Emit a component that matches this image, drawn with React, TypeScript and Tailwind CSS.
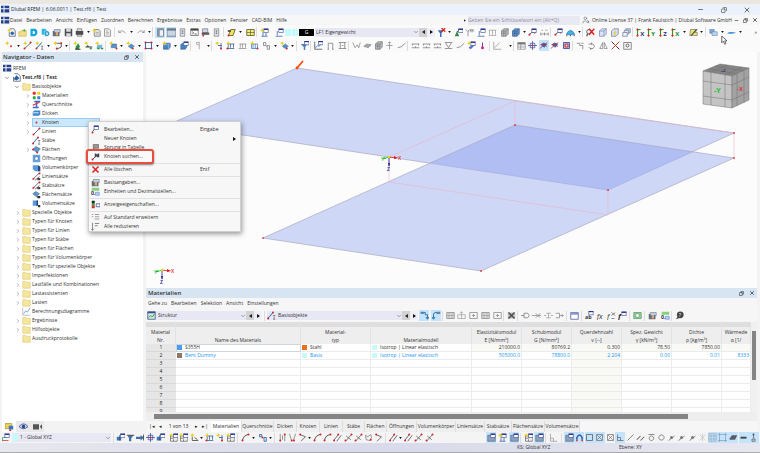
import React from 'react';
import clsx from 'clsx';
import { ChevronDown, ChevronRight, Copy, Minus, UserSearch, X } from 'lucide-react';

const star = <path d="M3 0l.9 2L6 3l-2.1 1L3 6l-.9-2L0 3l2.1-1z" fill="#e6cf1d" />;
const redDot = (x: number, y: number) => <circle key={`${x}-${y}`} cx={x} cy={y} r="1.3" fill="#d3232b" />;
const table = (x: number, y: number) => (
  <>
    <path d={`M${x} ${y}h6v5h-6z`} fill="#fff" stroke="#3a4a90" strokeWidth=".8" />
    <path d={`M${x} ${y}h6v1.6h-6z`} fill="#26368c" />
  </>
);
const line = (d: string, color = '#555', width = 1) => <path d={d} fill="none" stroke={color} strokeWidth={width} />;
const axis = (letter: string, color: string) => (
  <>
    {line('M2 11V2M2 2h4', '#1b9e2d', 1.4)}
    <path d="M0 3h4L2 0z" fill="#e0271c" />
    <circle cx="2" cy="10" r="1.5" fill="#e0271c" />
    <text x="5.5" y="11" fontSize="8" fontWeight="700" fill={color}>
      {letter}
    </text>
  </>
);

const glyphs: Record<string, React.ReactNode> = {
  newdoc: <>{line('M4 1h5l2 3v7H3V5', '#4c5a6a')}<circle cx="7" cy="7" r="2.4" fill="#2d66ae" />{star}</>,
  open: <><path d="M1 5h3l1-2h6v8H1z" fill="#f0de8c" stroke="#c5a943" strokeWidth=".7" /><path d="M6 4l3-3 1 4z" fill="#59b04e" /></>,
  dblue: <><path d="M2 1h5q5 0 4 6-1 4-5 4H2z" fill="#11a6df" /><path d="M5 4h2q2 2 0 4H5z" fill="#fff" /></>,
  dcopy: <><path d="M1 1h5l3 4v4H1z" fill="#2fb6e2" /><path d="M5 4h4q3 1 2 5-1 2-3 2H5z" fill="#0d94cc" stroke="#fff" strokeWidth=".6" /><path d="M7 6h2v3H7z" fill="#fff" /></>,
  brief: <><path d="M1 4h9v7H1z" fill="#666e78" /><path d="M3 2h8v4H3z" fill="#b9d2ec" stroke="#555" strokeWidth=".6" /><path d="M5 5h3v5H5z" fill="#d8a57a" /></>,
  save: <><path d="M1 1h9l1 1v9H1z" fill="#4a4d52" /><path d="M3 1h6v4H3zM3 7h6v4H3z" fill="#d8dbe0" /></>,
  print: <><path d="M3 1h6v4H3zM3 8h6v3H3z" fill="#ddd" stroke="#444" strokeWidth=".7" /><path d="M1 4h10v5H1z" fill="#4b4d50" /></>,
  pagestar: <><path d="M3 2h6l2 2v7H3z" fill="#e4e4e0" stroke="#6b6b66" strokeWidth=".9" />{line('M5 6h4M5 8h4', '#888', 0.7)}{star}</>,
  page: <><path d="M2 1h6l2 2v8H2z" fill="#eee" stroke="#777" strokeWidth=".9" />{line('M4 4h3M4 6h4M4 8h4', '#888', 0.7)}</>,
  undo: line('M1 6h3M1 3v3M1 6q5-5 9 1', '#8a8a8a'),
  redo: line('M11 6H8M11 3v3M11 6Q6 1 2 7', '#8a8a8a'),
  panel: <><path d="M2 1h8v10H2z" fill="#eef3f8" stroke="#56616e" strokeWidth=".9" /><path d="M2 1h8v2H2zM2 3h3v8H2z" fill="#8492a3" /></>,
  window: <><path d="M0 1h12v10H0z" fill="#cad5e4" stroke="#56616e" strokeWidth=".9" /><path d="M0 1h12v2.5H0z" fill="#68788d" /></>,
  phone: <><path d="M3 1h6v10H3z" fill="#dfe3e8" stroke="#777" strokeWidth=".9" /><path d="M5 3h2v2H5zM5 6h2v2H5z" fill="#6c7ca0" /></>,
  terminal: <><path d="M1 1h10v9H1z" fill="#fff" stroke="#555" strokeWidth=".9" /><path d="M1 1h10v2.5H1z" fill="#444" />{line('M3 5l2 1.5L3 8M6 8h3', '#333')}</>,
  printer2: <><path d="M2 1h7v5H2z" fill="#ccd5e6" stroke="#555" strokeWidth=".7" /><path d="M1 6h10v3H1z" fill="#555" />{redDot(3, 10)}</>,
  plane: <><path d="M2 10L5 2h6L8 10z" fill="#f3e458" stroke="#4e4a20" strokeWidth="1" />{redDot(2, 10)}<path d="M1 3h4v2H1z" fill="#333" /></>,
  ybox: <><path d="M1 2h10v8H1z" fill="#f6ee7a" stroke="#4b4b2a" strokeWidth="1" />{line('M6 2v8M1 6h10', '#4b4b2a', 0.8)}</>,
  startable: <>{line('M2 11h8M4 5v6M8 6v5', '#315fa5')}{table(5, 1)}{star}</>,
  loadtable: <>{line('M1 11h9M3 4v6', '#315fa5')}{table(5, 1)}</>,
  funnelx: <><path d="M1 3h8L6 7v5H4V7z" fill="#3a70b3" />{line('M6 0l5 5M11 0L6 5', '#d9201a', 1.7)}</>,
  funnel: <><path d="M1 4h9L7 8v4H5V8z" fill="#4d7fbd" />{table(6, 0)}</>,
  support: <><path d="M4 4l3 7H1z" fill="#32894a" />{line('M4 5l4-3', '#222')}{table(6, 1)}</>,
  graysup: <>{line('M1 2l3 3 2-3M4 5v6M7 3h4', '#7b7b7b')}{line('M7 2h4v3H7z', '#8a8a8a', 0.8)}</>,
  gload: <>{line('M1 3h10M2 3v6M6 3v6M10 3v6M1 10h10', '#888', 0.8)}</>,
  cube: <><path d="M2 4l3-3h6v7l-3 3H2z" fill="#b9bdc2" stroke="#666" strokeWidth=".8" />{line('M2 4h6v7M8 4l3-3M5 4v7M2 7h6', '#666', 0.7)}</>,
  bcube: <><path d="M2 4l3-3h6v7l-3 3H2z" fill="#6197d0" stroke="#274c7f" strokeWidth=".8" />{line('M2 4h6v7M8 4l3-3M5 4v7M2 7h6', '#274c7f', 0.7)}</>,
  lcube: <><path d="M2 4l3-3h6v7l-3 3H2z" fill="#d8e5f5" stroke="#6976ae" strokeWidth=".8" />{line('M2 4h6v7M8 4l3-3', '#6976ae', 0.8)}</>,
  ycube: <><path d="M2 4l3-3h6v7l-3 3H2z" fill="#d7dff5" stroke="#57658f" strokeWidth=".8" /><path d="M8 2L4 7h2l-1 4 4-5H7z" fill="#e9ce3d" /></>,
  copies: <><path d="M5 1h6v5H5z" fill="#cfd9ef" stroke="#57658f" strokeWidth=".8" /><path d="M3 3h6v5H3z" fill="#dfe6f5" stroke="#57658f" strokeWidth=".8" /><path d="M1 6h6v5H1z" fill="#eef2fa" stroke="#57658f" strokeWidth=".8" /></>,
  rlink: <>{line('M1 9l4-3h4', '#333')}{redDot(2, 9)}{redDot(9, 6)}{table(5, 1)}</>,
  dims: line('M1 8h10M1 6v4M6 6v4M11 6v4M2 3h2M7 3h3', '#777', 0.9),
  dome: <><path d="M1 7q5-8 10 0v2H1z" fill="#42afe5" stroke="#1d6b9a" strokeWidth=".7" />{line('M1 9v2M11 9v2M6 9v2', '#333')}</>,
  findx: <><circle cx="4" cy="5" r="3" fill="none" stroke="#444" strokeWidth="1.1" />{line('M2 8l-1 3', '#444', 1.5)}{line('M4 1l7 8M11 1L4 9', '#de1c18', 1.8)}</>,
  axx: axis('X', '#2a3270'),
  axy: axis('Y', '#1b8a2d'),
  axz: axis('Z', '#2a3270'),
  axmx: axis('X', '#1b8a2d'),
  edit: <><path d="M2 2h9l-3 4h3v4H1z" fill="#e9e27b" stroke="#555" strokeWidth=".7" />{line('M3 10l7-8', '#333', 1.5)}</>,
  layers: <><path d="M1 2h6v5H1z" fill="#7ea8d6" stroke="#466f9e" strokeWidth=".6" /><path d="M4 5h7v5H4z" fill="#bcd2ea" stroke="#466f9e" strokeWidth=".6" /></>,
  disc: <path d="M0 7q3-3 12-1-4 3-12 1z" fill="#3e8bd2" />,
  starnode: <>{star}{redDot(8, 7)}</>,
  starline: <>{line('M2 10l9-8', '#444')}{redDot(2, 10)}{redDot(10, 2)}{star}</>,
  starmember: <>{line('M2 10l7-8', '#3f7fc4', 1.4)}{redDot(2, 10)}{line('M8 7h3M9.500 7v4M8 11h3', '#555', 0.8)}{star}</>,
  starpoly: <>{line('M3 3h8v5L5 11', '#444', 1.1)}{redDot(11, 3)}{redDot(5, 10)}{star}</>,
  green: <><path d="M7 3l2 4-1 4H3l1-4z" fill="#2f8e46" />{line('M3 11h7', '#222', 1.2)}{star}</>,
  green2: <><path d="M3 8l2-3 2 3zM7 11l2-3 2 3z" fill="#2f8e46" />{line('M2 8h9', '#333', 1.2)}{star}</>,
  green3: <><path d="M3 5h7l-1 5H2z" fill="#7bb9d9" /><path d="M3 9h3v2H3zM8 9h3v2H8z" fill="#2f8e46" />{star}</>,
  surf: <><path d="M3 4h7v5H3z" fill="#4f93d3" stroke="#315c8a" strokeWidth=".6" />{redDot(10, 10)}{star}</>,
  surf2: <><path d="M3 7l4-3 4 3-4 3z" fill="#4f93d3" stroke="#315c8a" strokeWidth=".6" />{redDot(9, 10)}{star}</>,
  opening: <><path d="M2 2h8v8H2z" fill="none" stroke="#3974b8" strokeWidth="1.4" />{[redDot(2, 2), redDot(10, 2), redDot(2, 10), redDot(10, 10)]}</>,
  solid: <><path d="M2 5l2-2h7v5l-2 3H2z" fill="#4583c4" stroke="#2a5388" strokeWidth=".7" />{line('M2 5h7v6M9 5l2-2', '#bcd7f0', 0.8)}{star}</>,
  solidt: <><path d="M1 5l2-2h6v5l-2 3H1z" fill="#4583c4" stroke="#2a5388" strokeWidth=".7" />{table(5, 1)}</>,
  gflag: <>{line('M7 1v10M7 2H3l1 3h3', '#999')}</>,
  ystar: <>{line('M8 3v8M4 6h5', '#3e679d', 1.2)}{star}{redDot(8, 10)}</>,
  loads: <>{line('M2 4h9M3 4v5M6 4v5M10 4v5M1 10h10', '#3e679d', 1.1)}{redDot(2, 10)}{star}</>,
  gloads: <>{line('M2 4h9M3 4v5M6 4v5M10 4v5M1 10h10', '#888', 1)}</>,
  bloads: <>{line('M2 4h8v6H2zM4 4v6M7 4v6', '#3f7fc4', 1)}{redDot(10, 10)}{star}</>,
  gnum: line('M2 2h3v4H2zM7 6h3v5H7zM5 6l2 2', '#777'),
  diag: <>{line('M1 1v10h10', '#444')}{line('M2 9l3-3 2 1 3-4', '#2d7ad0', 1.2)}{table(6, 0)}</>,
  arch: line('M3 11V3h6v8M2 11h2M8 11h2', '#777'),
  frame: line('M1 2h10M1 10h10M3 2v8M9 2v8M5 6h2', '#777'),
  tri: line('M1 2l3 7 3-4 2 4 2-7', '#888'),
  surfg: <path d="M1 7l4-3 6 1-4 4z" fill="#aaa" stroke="#777" strokeWidth=".7" />,
  arrows: line('M6 1v10M2 6h8M4 3l2-2 2 2', '#888'),
  slope: line('M1 9q5 0 10-6', '#888', 1.2),
  zig: line('M1 4h10M1 9h10M2 4v2M6 9V7M10 4v2', '#777'),
  zigb: line('M1 2h10M1 10h10M2 2l4 7 4-7', '#777'),
  ystable: <><path d="M2 9l6-5 2 2-5 5z" fill="#4f74c4" />{table(5, 1)}{star}</>,
  pin: <>{line('M6 2v8', '#7a3fa0', 1.4)}<circle cx="6" cy="9" r="2" fill="#cc2589" /></>,
  angle: line('M1 1v10h10M2 9l7-7', '#888', 0.9),
  ggrid: <>{line('M1 2h10v9H1zM1 5h10M1 8h10M5 2v9', '#777', 0.8)}<path d="M1 2h10v2H1z" fill="#777" /></>,
  target: <>{line('M6 0v12M0 6h12M3 3h6v6H3z', '#3a4fa8')}{redDot(6, 6)}</>,
  turn: <><path d="M2 5l4-3 5 2-4 5z" fill="#3d6dc0" />{line('M1 10L11 2M2 5q6-3 8 3', '#c3262b')}</>,
  redbox: <><path d="M2 2h8v8H2z" fill="#d9dff2" stroke="#3a4fa8" strokeWidth="1.2" />{line('M4 4h4v4H4z', '#c3262b', 1.4)}</>,
  mirror: line('M1 10l4-8v8zM11 10L7 2v8z', '#777', 0.9),
  rot: line('M2 4h6l2 3-2 3H4L2 8M6 2v3M5 9v3', '#777'),
  gcurve: line('M1 3h4v3h4v5M7 3h3', '#777'),
  redx: <>{line('M1 1l10 10M11 1L1 11', '#c7352d', 1.3)}{line('M1 1l3 3M8 8l3 3', '#333', 1.3)}</>,
  gear: <>{line('M1 2h10v9H1z', '#666')}<circle cx="6" cy="6" r="2" fill="none" stroke="#555" strokeWidth="1.2" /></>,
  flag: <><path d="M0 1h11v9H0z" fill="#27408b" />{line('M4 1v9M0 5h11', '#fff', 1.3)}</>,
  rfdoc: <>{line('M3 1h5l3 3v7H2V5', '#4c5a6a')}<path d="M2 8l4-5 4 4-4 3z" fill="#2a5fa4" /></>,
  folder: <><path d="M1 2h4l1 1h5v8H1z" fill="#f4e69c" stroke="#d8c46b" strokeWidth=".7" /></>,
  mats: <><circle cx="3" cy="3" r="2.200" fill="#e33" /><path d="M7 1h4v4H7z" fill="#e8d520" /><circle cx="3" cy="9" r="2.200" fill="#2fae3c" /><path d="M7 7h4v4H7z" fill="#3a7ddb" /></>,
  section: <>{line('M3 2h8M1 10h8M6 2v8', '#4566cc', 2)}{line('M1 7l9-4', '#d5304a', 1.7)}</>,
  thick: <><path d="M1 4l2-2h8v5l-2 2H1z" fill="#3f86cc" /><path d="M1 4h8v2H1z" fill="#a5cdf0" /></>,
  node: redDot(6, 6),
  line: <>{line('M2 10l8-8', '#444', 1.1)}{redDot(2, 10)}{redDot(10, 2)}</>,
  member: <>{line('M1 10l7-8', '#3f7fc4', 1.5)}{redDot(1.5, 10)}{redDot(8, 2)}{line('M8 6h3M9.500 6v5M8 11h3', '#555', 0.8)}</>,
  surface: <><path d="M1 6l4-4 6 3-4 5z" fill="#5b98d6" stroke="#466" strokeWidth=".7" />{redDot(1.5, 6)}{redDot(7, 10)}</>,
  hole: <><path d="M1 1h10v10H1z" fill="#65a2dc" /><circle cx="6" cy="6" r="2.500" fill="#fff" stroke="#345f90" strokeWidth=".7" /></>,
  body: <><path d="M1 3h7l3 2v6H4L1 8z" fill="#5a99d8" /><path d="M8 3l3 2v6H8z" fill="#24497b" /></>,
  lset: <>{line('M1 10l9-9M4 11l6-5', '#444')}{redDot(2, 9)}{redDot(10, 2)}<path d="M7 8h4v3H7z" fill="#444" /></>,
  sset: <><path d="M1 5l4-3 5 3-4 4z" fill="#5b98d6" stroke="#466" strokeWidth=".7" /><path d="M7 8h4v3H7z" fill="#333" /></>,
  bset: <><path d="M1 2h7v7H1z" fill="#5a99d8" /><path d="M6 2h2v7H6z" fill="#24497b" /><path d="M8 8h3v3H8z" fill="#333" /></>,
  chart: <>{line('M1 1v10h10', '#999', 0.8)}{line('M2 9l3-4 2 2 4-6', '#4687c9', 0.9)}</>,
  mtable: <>{line('M2 9l3-4', '#333')}{redDot(2, 10)}{table(4, 1)}</>,
  jump: <>{line('M2 9l3-3', '#333')}{redDot(2, 10)}<path d="M3 2h7v5H3z" fill="#999" stroke="#555" strokeWidth=".8" /></>,
  find: <>{line('M2 10l4-4', '#333', 1.1)}{redDot(2, 10)}<path d="M5 2h2v1h2V2h2v5H8V6H7v1H5z" fill="#3f4655" /></>,
  del: line('M2 2l8 8M10 2l-8 8', '#d8201c', 2),
  units: <><path d="M1 1h10v4H1z" fill="#88cf7e" /><text x="0" y="11" fontSize="7" fontWeight="700" fill="#333">0.</text><path d="M6 7h5v4H6z" fill="#b5cffa" stroke="#5577d5" strokeWidth=".7" /></>,
  display: <><path d="M1 1h4v3H1z" fill="#222" /><path d="M1 4h4v3H1z" fill="#2ba23a" /><path d="M1 7h4v4H1z" fill="#c33" /><path d="M7 5h5v4H7z" fill="#fff" stroke="#26368c" strokeWidth=".9" /></>,
  expand: line('M1 2h2M5 2h6M5 5h6M5 8h6M1 5h2', '#777', 0.9),
  collapse: line('M5 2h6M5 5h4M2 1v10M0 9l2 2 2-2', '#555', 0.9),
  eye: <><path d="M0 6q6-7 12 0-6 6-12 0z" fill="#cfd9ef" stroke="#27408b" strokeWidth="1" /><circle cx="6" cy="6" r="2.200" fill="#27408b" /></>,
  camera: <><path d="M0 3h8v7H0z" fill="#555" /><path d="M9 6l3-3v7z" fill="#555" /></>,
  navdata: <><path d="M0 2h9v7H0z" fill="#f0cf55" stroke="#8c7420" strokeWidth=".7" /><path d="M5 5h6v5H5z" fill="#3b74c1" />{redDot(7, 11)}</>,
  struct: <><path d="M1 1h10v10H1z" fill="#d8e8da" stroke="#35508f" strokeWidth="1" /><path d="M1 1h10v2H1z" fill="#35508f" />{line('M2 9l3-3 2 2 3-4', '#2f9e45', 1.3)}</>,
  swapd: <>{line('M1 2h6v3h3v5M8 8l2 3 2-3', '#24699f', 1.2)}<path d="M1 1h4v3H1z" fill="#5b84ad" /></>,
  swapu: <>{line('M10 2H5q-3 0-3 3v5M0 8l2 3 2-3', '#24699f', 1.2)}<path d="M6 1h5v3H6z" fill="#5b84ad" /></>,
  rows: <><path d="M1 2h10v8H1z" fill="#ddd" stroke="#888" strokeWidth="1" />{line('M1 6h10M4 2v8M8 2v8', '#999', 0.8)}</>,
  insrow: line('M1 5h10v5H1zM6 1v4M4 3l2-2 2 2M6 5v5', '#999', 0.9),
  addrow: <>{line('M1 2h10v8H1zM6 4v4M4 6h4', '#888')}</>,
  gx: <><path d="M1 2h10v8H1z" fill="#bbb" />{line('M2 2l8 8M10 2l-8 8', '#444', 1.6)}</>,
  conn: line('M0 6h4M4 3h5l2 3-2 3H4z', '#777'),
  connx: line('M0 6h12M5 3l6 6M11 3L5 9', '#888'),
  plug: line('M0 6h3M3 3h6M3 9h6M9 6h3M6 3v6', '#999'),
  conno: line('M1 3h5v6H1M6 6h5M9 4l2 2-2 2', '#888'),
  tframe: <><path d="M1 2h10v9H1z" fill="#fff" stroke="#49549b" strokeWidth="1" /><path d="M1 2h10v3H1z" fill="#8d98cb" /></>,
  fx: <text x="1" y="10" fontSize="10" fontStyle="italic" fill="#333">fx</text>,
  fxx: <><text x="0" y="11" fontSize="10" fontStyle="italic" fill="#333">f</text>{line('M6 2l5 4M11 2L6 6M6 10h4', '#666')}</>,
  fxt: <><text x="0" y="11" fontSize="10" fontStyle="italic" fontWeight="700" fill="#222">f</text>{table(5, 1)}</>,
  abtab: <><text x="0" y="11" fontSize="7" fontWeight="700" fill="#333">ab</text>{table(5, 0)}</>,
  globe: <><path d="M1 2h10v8H1z" fill="#9fcca2" stroke="#3a8b4b" strokeWidth=".8" /><circle cx="6" cy="6" r="2.600" fill="#fff" stroke="#3a8b4b" strokeWidth=".8" /></>,
  help: <><circle cx="7" cy="5" r="4.500" fill="#444" /><path d="M1 11l4-5 2 3z" fill="#444" /><text x="5" y="8" fontSize="7" fill="#fff">?</text></>,
  lcs: <>{line('M2 11V6h5l3-4', '#2d9d3b')}{line('M2 10h8', '#c33')}{table(5, 1)}</>,
  vis: <><path d="M1 5h6v5H1z" fill="#3e79ba" />{line('M5 10V3h6', '#345')}{table(6, 1)}</>,
  vis2: <><path d="M2 3h8L7 7v4H4V7z" fill="#4472a8" />{line('M1 3h10', '#333')}</>,
  visarrow: <><path d="M0 5h6V3l5 3-5 4V8H0z" fill="#4472a8" />{line('M10 2v8', '#333')}</>,
  ygrid: <>{line('M2 4h9v7H2zM2 7h9M6 4v7', '#555', 0.9)}<path d="M6 5h5v4H6z" fill="#e9e9ef" />{table(6, 1)}{star}</>,
  ysup: <>{line('M3 5v5h8M6 6l4 3', '#444', 1.1)}{star}</>,
  curve: <>{line('M2 10q1-7 8-8', '#444', 1.2)}{redDot(2, 10)}{redDot(10, 2)}</>,
  pairv: <>{line('M3 1v10M9 1v10M6 3v6', '#777')}{redDot(3, 10)}{redDot(9, 2)}</>,
  vee: <>{line('M2 1l3 10M10 1L7 11', '#777')}{redDot(5, 10)}{redDot(8, 10)}</>,
  bend: <>{line('M2 2l8 3-6 6', '#444')}{redDot(3, 2)}</>,
  par: <>{line('M1 10l6-8M5 11l6-8', '#555', 1.1)}{redDot(1.5, 10)}{redDot(7, 2)}</>,
  cross: <>{line('M2 11l8-9M3 4l6 5', '#555')}{redDot(2, 10)}{redDot(10, 2)}</>,
  poly: <>{line('M2 3l3 2 4-3 1 4-2 4-5-1z', '#777')}{redDot(9, 9)}</>,
  num: <>{line('M2 2h3v3H2zM8 6h3v5H8z', '#3169b0', 1.2)}{redDot(6, 6)}</>,
  snap: <><path d="M1 3h10v8H1z" fill="#8da2bd" stroke="#4b5f82" strokeWidth=".8" />{table(5, 1)}</>,
  magnet: <>{line('M2.500 9V6q3.500-7 7 0v3', '#315ba8', 2)}{line('M2.500 9v2M9.500 9v2', '#d22', 2)}</>,
  sq: line('M2 2h8v8H2z', '#555'),
  sqc: <>{line('M2 2h8v8H2zM3 3l6 6M9 3L3 9', '#666', 0.9)}</>,
  corner: line('M2 1v10h9M2 7h4v4', '#999'),
  perp: line('M2 2v8h8M2 6h4v4', '#666'),
  seg: line('M2 10l8-8', '#666'),
  dpar: line('M1 9l5-5M6 10l5-5', '#666', 1.4),
  tang: line('M2 2h8M6 4a3 3 0 1 1-.1 0', '#666'),
  ring: line('M6 2.500a3.500 3.500 0 1 1-.1 0', '#666'),
  slashq: <>{line('M2 10l8-6', '#666')}<circle cx="6" cy="6" r="2" fill="#777" /></>,
  burst: line('M2 2l8 8M10 2l-8 8M6 1v10', '#bbb', 0.8),
  lgrid: line('M1 1h10v10H1zM1 4h10M1 8h10M4 1v10M8 1v10', '#8fa4b8', 0.8),
  bounds: <>{line('M2 0v12M10 0v12M0 2h12M0 10h12', '#7f9bb5', 0.9)}</>,
  slab: <path d="M1 7l3-4h7L8 9H1z" fill="#555e6a" />,
  dash: <path d="M2 5h8v2.500H2z" fill="#444" />,
  person: <>{line('M6 2v5M4 11V8h4v3z', '#555')}<circle cx="6" cy="2" r="1.300" fill="#555" /></>,
};

type IconProps = { name: string };

const Icon: React.FC<IconProps> = ({ name }) => (
  <svg viewBox="0 0 12 12" className="size-[9px] shrink-0" aria-hidden="true">
    {glyphs[name]}
  </svg>
);

type GroupProps = { items: string; className: string; last?: boolean };

// items: glyph names, ">" is a drop-down arrow, a leading "!" marks a pressed tool
const Group: React.FC<GroupProps> = ({ items, className, last }) => (
  <div className={clsx('flex h-full shrink-0 items-center justify-between px-px', className)}>
    <div className="flex flex-1 items-center justify-between">
      {items.split(' ').map((item, i) =>
        item === '>' ? (
          <button key={i} aria-label="Mehr" className="flex w-1 justify-center">
            <svg viewBox="0 0 4 3" className="h-[2px] w-[3px]">
              <path d="M0 0h4L2 3z" fill="#111" />
            </svg>
          </button>
        ) : (
          <button
            key={i}
            aria-label={item.replace('!', '')}
            className={clsx('flex h-[11px] w-[10px] items-center justify-center', item[0] === '!' && 'bg-[#c5e3fa]')}
          >
            <Icon name={item.replace('!', '')} />
          </button>
        ),
      )}
    </div>
    {!last && <span className="ml-px h-[10px] w-px bg-[#dcdcdc]" />}
  </div>
);

const Steps = () => (
  <div className="flex h-[9px] shrink-0">
    <button aria-label="Zurück" className="flex w-[8px] items-center justify-center bg-[#d2d2d4]">
      <svg viewBox="0 0 3 4" className="h-[4px] w-[3px]"><path d="M3 0v4L0 2z" fill="#222" /></svg>
    </button>
    <button aria-label="Weiter" className="flex w-[8px] items-center justify-center bg-[#efeff8]">
      <svg viewBox="0 0 3 4" className="h-[4px] w-[3px]"><path d="M0 0v4l3-2z" fill="#111" /></svg>
    </button>
  </div>
);

type PickerProps = { label: string; value: string; className: string };

const Picker: React.FC<PickerProps> = ({ label, value, className }) => (
  <label className={clsx('flex h-[9px] shrink-0 items-center bg-[#e8e8f5]', className)}>
    <select aria-label={label} className="min-w-0 flex-1 appearance-none bg-transparent pl-px outline-none">
      <option>{value}</option>
    </select>
    <ChevronDown className="size-[6px] text-gray-600" />
  </label>
);

const menus = ['Datei', 'Bearbeiten', 'Ansicht', 'Einfügen', 'Zuordnen', 'Berechnen', 'Ergebnisse', 'Extras', 'Optionen', 'Fenster', 'CAD-BIM', 'Hilfe'];

const Header = () => (
  <header className="shrink-0">
    <div className="h-[4px] bg-[#e9e7e0]" />
    <div className="flex h-[11px] items-center gap-px bg-[#ecf2fb] pl-px text-[#222]">
      <Icon name="flag" />
      <h1 className="flex-1">Dlubal RFEM | 6.06.0011 | Test.rf6 | Test</h1>
      <div className="flex w-[63px] items-center justify-between pr-[9px]">
        <button aria-label="Minimieren"><Minus className="size-[7px]" /></button>
        <button aria-label="Verkleinern"><Copy className="size-[6px] -scale-x-100" /></button>
        <button aria-label="Schließen"><X className="size-[8px]" /></button>
      </div>
    </div>
    <div className="flex h-[10px] items-center bg-[#f7f7f8] pl-px">
      <Icon name="flag" />
      <nav className="flex w-[277px] justify-between">
        {menus.map((m) => (
          <button key={m}>{m}</button>
        ))}
      </nav>
      <div className="ml-auto flex items-center">
        <svg viewBox="0 0 3 4" className="mr-[2px] h-[3px] w-[2px]"><path d="M0 0v4l3-2z" fill="#333" /></svg>
        <input
          aria-label="Suche"
          placeholder="Geben Sie ein Schlüsselwort ein (Alt+Q)"
          className="h-[9px] w-[112px] bg-[#e9e9f4] placeholder:text-[#8c8c96]"
        />
        <UserSearch className="mx-[2px] size-[8px] text-gray-500" />
        <span className="pr-[2px] whitespace-nowrap">Online License 37 | Frank Faulstich | Dlubal Software GmbH</span>
        <div className="flex w-[26px] items-center justify-between pr-[2px]">
          <Minus className="size-[5px]" strokeWidth={3} />
          <Copy className="size-[5px] -scale-x-100" strokeWidth={3} />
          <X className="size-[6px]" strokeWidth={3} />
        </div>
      </div>
    </div>
    <div className="flex h-[14px] items-center overflow-hidden bg-[#fafafa] pl-[5px]">
      <Group className="w-[111px]" items="newdoc open dblue dcopy brief save print > pagestar page" />
      <Group className="w-[38px]" items="undo > redo >" />
      <Group className="w-[71px]" items="!panel !window phone terminal printer2 phone" />
      <Group className="w-[33px]" items="plane > ybox" />
      <Group className="w-[27px]" items="startable loadtable" last />
      <span className="h-[7px] w-[6px] bg-[#c7fbfb]" />
      <span className="ml-px h-[7px] w-[6px] bg-[#c7fbfb]" />
      <span className="mx-px w-[15px] bg-black text-center leading-[7px] text-white">G</span>
      <Picker label="Lastfall" value="LF1   Eigengewicht" className="w-[104px]" />
      <Steps />
      <Group className="w-[117px]" items="funnelx > support graysup loadtable gload cube bcube > rlink dims" />
      <Group className="w-[32px]" items="rlink dome >" />
      <Group className="w-[50px]" items="findx lcube ycube copies" />
      <Group className="w-[73px]" items="axx axy axz axmx > edit >" />
      <Group className="w-[36px]" items="layers > disc >" last />
      <span className="mr-[3px] ml-auto">»</span>
    </div>
    <div className="flex h-[13px] items-center overflow-hidden bg-[#fafafa] pl-[3px]">
      <Group className="w-[68px]" items="starnode > starline starmember > starpoly >" />
      <Group className="w-[36px]" items="green green2 green3" />
      <Group className="w-[85px]" items="surf > surf2 > opening > solid > solidt" />
      <Group className="w-[21px]" items="gflag >" />
      <Group className="w-[85px]" items="ystar loads gloads bloads gnum > surf2 >" />
      <Group className="w-[14px]" items="funnel" />
      <Group className="w-[38px]" items="diag arch frame" />
      <Group className="w-[59px]" items="tri surfg cube arrows slope" />
      <Group className="w-[82px]" items="zig zig zig zigb slope ystable pin" />
      <Group className="w-[24px]" items="angle >" />
      <Group className="w-[59px]" items="ggrid target !turn turn redbox" />
      <Group className="w-[59px]" items="gcurve rot mirror redx gear" last />
    </div>
  </header>
);

type TreeItem = { label: string; icon: string; depth: number; open?: boolean; leaf?: boolean; active?: boolean };

const tree: TreeItem[] = [
  { label: 'RFEM', icon: 'flag', depth: 0, leaf: true },
  { label: 'Test.rf6 | Test', icon: 'rfdoc', depth: 1, open: true },
  { label: 'Basisobjekte', icon: 'folder', depth: 2, open: true },
  { label: 'Materialien', icon: 'mats', depth: 3 },
  { label: 'Querschnitte', icon: 'section', depth: 3 },
  { label: 'Dicken', icon: 'thick', depth: 3 },
  { label: 'Knoten', icon: 'node', depth: 3, active: true },
  { label: 'Linien', icon: 'line', depth: 3 },
  { label: 'Stäbe', icon: 'member', depth: 3, leaf: true },
  { label: 'Flächen', icon: 'surface', depth: 3 },
  { label: 'Öffnungen', icon: 'hole', depth: 3, leaf: true },
  { label: 'Volumenkörper', icon: 'body', depth: 3, leaf: true },
  { label: 'Liniensätze', icon: 'lset', depth: 3, leaf: true },
  { label: 'Stabsätze', icon: 'lset', depth: 3, leaf: true },
  { label: 'Flächensätze', icon: 'sset', depth: 3, leaf: true },
  { label: 'Volumensätze', icon: 'bset', depth: 3, leaf: true },
  { label: 'Spezielle Objekte', icon: 'folder', depth: 2 },
  { label: 'Typen für Knoten', icon: 'folder', depth: 2 },
  { label: 'Typen für Linien', icon: 'folder', depth: 2 },
  { label: 'Typen für Stäbe', icon: 'folder', depth: 2 },
  { label: 'Typen für Flächen', icon: 'folder', depth: 2 },
  { label: 'Typen für Volumenkörper', icon: 'folder', depth: 2 },
  { label: 'Typen für spezielle Objekte', icon: 'folder', depth: 2 },
  { label: 'Imperfektionen', icon: 'folder', depth: 2 },
  { label: 'Lastfälle und Kombinationen', icon: 'folder', depth: 2 },
  { label: 'Lastassistenten', icon: 'folder', depth: 2 },
  { label: 'Lasten', icon: 'folder', depth: 2 },
  { label: 'Berechnungsdiagramme', icon: 'chart', depth: 2, leaf: true },
  { label: 'Ergebnisse', icon: 'folder', depth: 2 },
  { label: 'Hilfsobjekte', icon: 'folder', depth: 2 },
  { label: 'Ausdruckprotokolle', icon: 'folder', depth: 2, leaf: true },
];

const indents = ['pl-px', 'pl-[2px]', 'pl-[12px]', 'pl-[22px]'];

const Navigator = () => (
  <aside className="flex w-[141px] shrink-0 flex-col bg-white">
    <div className="flex h-[10px] items-center bg-[#d7e5f3] pr-[3px] pl-px">
      <h2 className="flex-1 text-[6px] font-semibold">Navigator - Daten</h2>
      <button aria-label="Andocken" className="mr-[5px]"><Copy className="size-[5px] -scale-x-100" strokeWidth={3} /></button>
      <button aria-label="Schließen"><X className="size-[6px]" strokeWidth={3} /></button>
    </div>
    <ul className="flex-1 pt-[2px]">
      {tree.map((t) => (
        <li key={t.label} className={clsx('flex h-[9px] items-center', indents[t.depth])}>
          {t.depth > 0 && (
            <span className="flex w-[8px] shrink-0">
              {!t.leaf && (t.open ? <ChevronDown className="size-[6px]" /> : <ChevronRight className="ml-px size-[6px] text-gray-500" />)}
            </span>
          )}
          <span className={clsx('flex h-full items-center gap-px', t.active && 'w-[68px] bg-[#cbe7fb] outline outline-[#99cdf2] -outline-offset-1')}>
            <Icon name={t.icon} />
            <span className={clsx(t.depth === 1 && 'font-bold')}>{t.label}</span>
          </span>
        </li>
      ))}
    </ul>
    <div className="flex h-[11px] bg-[#f3f3f3]" role="tablist">
      {['navdata', 'eye', 'camera'].map((name, i) => (
        <button key={name} role="tab" aria-label={name} className={clsx('flex w-[14px] items-center justify-center', i === 0 ? 'bg-white' : 'bg-[#e9e9e9]')}>
          <Icon name={name} />
        </button>
      ))}
    </div>
  </aside>
);

type TriadProps = { x: number; y: number };

const Triad: React.FC<TriadProps> = ({ x, y }) => (
  <g transform={`translate(${x} ${y})`} fontSize="5" fontWeight="600" strokeWidth=".8">
    <path d="M0 0l7 1" stroke="#e11b22" />
    <path d="M5-1l4 2-4 1z" fill="#e11b22" />
    <path d="M0 0l-6 2" stroke="#18c22c" />
    <path d="M-4 0l-3 2h4z" fill="#18c22c" />
    <path d="M0 0v9" stroke="#22228a" />
    <path d="M-1 6h2l-1 4z" fill="#22228a" />
    <circle r="1.200" fill="#e8d71a" />
    <text x="9" y="3" fill="#e11b22">X</text>
    <text x="-8" y="4" fill="#18c22c">Y</text>
    <text x="-2" y="14" fill="#22228a">Z</text>
  </g>
);

const nodes = [[734, 133], [734, 158], [608, 190], [515, 125], [481, 271], [263, 238]];

const Model = () => (
  <svg viewBox="146 52 611 236" preserveAspectRatio="xMinYMin slice" className="min-h-0 w-full flex-1 bg-[#fcfcfc]">
    <path d="M297 68L734 133 608 190 170 124z" fill="#a9b8f2" fillOpacity=".55" stroke="#a9abc0" strokeWidth=".7" />
    <path d="M515 125L734 158 481 271 263 238z" fill="#a9b8f2" fillOpacity=".55" stroke="#a9abc0" strokeWidth=".7" />
    <path d="M515 125L693 152 608 190 430 163z" fill="#8c9ff0" fillOpacity=".2" />
    <path d="M515 101L389 157v25l219 33v-25M515 101v24M734 133v25M515 101l219 32" fill="none" stroke="#e5b5c4" strokeWidth=".6" />
    {nodes.map(([x, y]) => (
      <rect key={`${x}-${y}`} x={x - 0.7} y={y - 0.7} width="1.500" height="1.500" fill="#e11b22" />
    ))}
    <path d="M297 68l6-7" stroke="#ff4a0a" strokeWidth="1.800" />
    <circle cx="297" cy="68" r="1.400" fill="#ff4a0a" />
    <Triad x={389} y={157} />
    <Triad x={162} y={270} />
    <g stroke="#707070" strokeWidth=".5">
      <path d="M703 71l17-7 29 4-17 8z" fill="#858585" />
      <path d="M703 71l29 5v32l-29-4z" fill="#c4c4c4" />
      <path d="M732 76l17-8v32l-17 8z" fill="#a3a3a3" />
      <path d="M703 81l29 4 17-8M703 96l29 4 17-8M711 72v33M725 75v32M737 74v32M744 71v32M709 69l28 5M715 66l29 5M711 72l16-7M725 75l17-8" fill="none" />
    </g>
    <text x="714" y="93" fontSize="7" fontWeight="700" fill="#17c02b">-Y</text>
    <text x="737" y="91" fontSize="6" fontWeight="700" fill="#d93a3a">-X</text>
    <text x="721" y="72" fontSize="4" fontWeight="700" fill="#34347c">+Z</text>
  </svg>
);

const columns = [
  { head: ['Material', 'Nr.'], width: 'w-[30px]' },
  { head: ['', 'Name des Materials'], width: 'w-[125px]' },
  { head: ['Material-', 'typ'], width: 'w-[70px]' },
  { head: ['', 'Materialmodell'], width: 'w-[101px]' },
  { head: ['Elastizitätsmodul', 'E [N/mm²]'], width: 'w-[50px]' },
  { head: ['Schubmodul', 'G [N/mm²]'], width: 'w-[50px]' },
  { head: ['Querdehnzahl', 'v [--]'], width: 'w-[50px]' },
  { head: ['Spez. Gewicht', 'γ [kN/m³]'], width: 'w-[50px]' },
  { head: ['Dichte', 'ρ [kg/m³]'], width: 'w-[50px]' },
  { head: ['Wärmede', 'α [1/'], width: '' },
];

const materials = [
  { name: 'S355H', type: 'Stahl', colors: ['bg-[#4a9cf5]', 'bg-[#e9701f]'], values: ['210000.0', '80769.2', '0.300', '78.50', '7850.00', ''], link: false },
  { name: 'Bent Dummy', type: 'Basis', colors: ['bg-[#8b7765]', 'bg-[#c7fbfb]'], values: ['505000.0', '78800.0', '2.204', '0.00', '0.01', '8333'], link: true },
];

const Swatch: React.FC<{ color: string }> = ({ color }) => <span className={clsx('mr-[3px] inline-block h-[5px] w-[5px] align-middle', color)} />;

const MaterialTable = () => (
  <div className="flex h-[90px] overflow-hidden bg-white">
    <div className="h-full min-w-0 flex-1 overflow-hidden">
      <table className="w-full table-fixed border-separate border-spacing-0 whitespace-nowrap">
        <thead>
          <tr>
            {columns.map((c) => (
              <th key={c.head[1]} className={clsx('border-r border-[#e2e2e2] bg-[#eee] p-0 font-normal', c.width)}>
                <div className="h-[5px] bg-[#dedede]" />
                <div className="flex h-[17px] flex-col pt-px leading-[8px]">
                  <span className="h-[8px]">{c.head[0]}</span>
                  <span>{c.head[1]}</span>
                </div>
              </th>
            ))}
          </tr>
        </thead>
        <tbody className="leading-[7px]">
          {Array.from({ length: 9 }, (_, i) => {
            const m = materials[i];
            const cell = 'h-[8px] overflow-hidden border-r border-b border-[#ececec] p-0';
            return (
              <tr key={i} className={clsx(m?.link && 'text-[#2196f3]')}>
                <td className="h-[8px] border-b border-[#d8d8d8] bg-[#e6e6e6] p-0 text-center text-[#222]">{i + 1}</td>
                <td className={clsx(cell, 'pl-px', i === 0 && 'outline outline-gray-300 -outline-offset-1')}>{m && <><Swatch color={m.colors[0]} />{m.name}</>}</td>
                <td className={clsx(cell, 'pl-px')}>{m && <><Swatch color={m.colors[1]} />{m.type}</>}</td>
                <td className={clsx(cell, 'pl-px')}>{m && <><Swatch color="bg-[#c7fbfb]" />Isotrop | Linear elastisch</>}</td>
                {Array.from({ length: 6 }, (_, j) => (
                  <td key={j} className={clsx(cell, 'pr-px text-right', (j === 2 || i === 0) && 'bg-[#f9f9f5]')}>{m?.values[j]}</td>
                ))}
              </tr>
            );
          })}
        </tbody>
      </table>
    </div>
    <div className="w-[6px] bg-[#f0f0f0] pt-[9px]">
      <div className="ml-px h-[49px] w-[4px] bg-[#858585]" />
    </div>
  </div>
);

const tabs = ['Materialien', 'Querschnitte', 'Dicken', 'Knoten', 'Linien', 'Stäbe', 'Flächen', 'Öffnungen', 'Volumenkörper', 'Liniensätze', 'Stabsätze', 'Flächensätze', 'Volumensätze'];
const tabWidths = ['w-[31px]', 'w-[32px]', 'w-[23px]', 'w-[23px]', 'w-[23px]', 'w-[22px]', 'w-[22px]', 'w-[30px]', 'w-[39px]', 'w-[29px]', 'w-[27px]', 'w-[33px]', 'w-[35px]'];

const Materials = () => (
  <section className="shrink-0 bg-[#f6f6f7]">
    <div className="flex h-[10px] items-center bg-[#d7e5f3] px-[2px]">
      <h2 className="flex-1 text-[6px] font-semibold">Materialien</h2>
      <button aria-label="Andocken" className="mr-[5px]"><Copy className="size-[5px] -scale-x-100" strokeWidth={3} /></button>
      <button aria-label="Schließen"><X className="size-[6px]" strokeWidth={3} /></button>
    </div>
    <nav className="flex h-[11px] items-center gap-[4px] pl-[2px]">
      {['Gehe zu', 'Bearbeiten', 'Selektion', 'Ansicht', 'Einstellungen'].map((m) => (
        <button key={m}>{m}</button>
      ))}
    </nav>
    <div className="flex h-[13px] items-center overflow-hidden pl-px">
      <div className="flex h-[9px] items-center gap-px bg-[#e8e8f5]">
        <Icon name="struct" />
        <Picker label="Kategorie" value="Struktur" className="w-[89px]" />
      </div>
      <Steps />
      <span className="mx-[2px] h-[10px] w-px bg-[#dcdcdc]" />
      <div className="flex h-[9px] items-center gap-px bg-[#e8e8f5]">
        <Icon name="member" />
        <Picker label="Tabelle" value="Basisobjekte" className="w-[125px]" />
      </div>
      <Steps />
      <Group className="w-[26px]" items="!swapd !swapu" />
      <Group className="w-[61px]" items="rows insrow addrow rows addrow" />
      <Group className="w-[14px]" items="gx" />
      <Group className="w-[49px]" items="conn connx plug conno" />
      <Group className="w-[15px]" items="tframe" />
      <Group className="w-[48px]" items="abtab fx fxx fxt" />
      <Group className="w-[15px]" items="globe" />
      <Group className="w-[27px]" items="brief units" />
      <Group className="w-[15px]" items="help" last />
    </div>
    <MaterialTable />
    <div className="flex h-[9px] items-center bg-[#eee] pr-[69px] pl-[8px]">
      <div className="h-[5px] flex-1 bg-[#858585]" />
    </div>
    <div className="flex h-[11px] items-center">
      <div className="flex w-[65px] items-center justify-between px-[3px] text-[#222]">
        <button>|◂</button>
        <button>◂</button>
        <span className="px-[2px]">1 von 13</span>
        <button>▸</button>
        <button>▸|</button>
      </div>
      <div className="flex h-full" role="tablist">
        {tabs.map((t, i) => (
          <button key={t} role="tab" className={clsx('border-r border-[#dcdcdc] text-center whitespace-nowrap', tabWidths[i], i === 0 ? 'bg-white' : 'bg-[#efefef]')}>
            {t}
          </button>
        ))}
      </div>
    </div>
  </section>
);

type MenuEntry = { label: string; icon?: string; hint?: string; sub?: boolean; marked?: boolean };

const contextMenu: MenuEntry[][] = [
  [
    { label: 'Bearbeiten...', icon: 'mtable', hint: 'Eingabe' },
    { label: 'Neuer Knoten', sub: true },
    { label: 'Sprung in Tabelle', icon: 'jump' },
    { label: 'Knoten suchen...', icon: 'find', marked: true },
  ],
  [{ label: 'Alle löschen', icon: 'del', hint: 'Entf' }],
  [{ label: 'Basisangaben...', icon: 'brief' }, { label: 'Einheiten und Dezimalstellen...', icon: 'units' }],
  [{ label: 'Anzeigeeigenschaften...', icon: 'display' }],
  [{ label: 'Auf Standard erweitern', icon: 'expand' }, { label: 'Alle reduzieren', icon: 'collapse' }],
];

const ContextMenu = () => (
  <div role="menu" className="absolute top-[121px] left-[88px] w-[153px] border border-[#d0d0d0] bg-[#f7f7f7] pt-[3px] shadow-[1px_2px_5px_rgba(0,0,0,0.4)]">
    {contextMenu.map((section, s) => (
      <div key={s} className={clsx(s > 0 && 'mt-[2px] border-t border-[#e2e2e2] pt-px')}>
        {section.map((e) => (
          <button key={e.label} role="menuitem" className="relative flex h-[9px] w-full items-center pl-[2px] text-left">
            {e.marked && <span className="absolute -inset-y-[3px] -left-[3px] w-[68px] rounded-[3px] border-2 border-[#ea4d3d] bg-[#f9f9f9] shadow-[0_1px_2px_rgba(0,0,0,0.5)]" />}
            <span className="relative w-[13px]">{e.icon && <Icon name={e.icon} />}</span>
            <span className="relative w-[96px]">{e.label}</span>
            <span>{e.hint}</span>
            {e.sub && <svg viewBox="0 0 3 4" className="mr-[4px] ml-auto h-[4px] w-[3px]"><path d="M0 0v4l3-2z" fill="#111" /></svg>}
          </button>
        ))}
      </div>
    ))}
  </div>
);

const Footer = () => (
  <footer className="shrink-0">
    <div className="flex h-[11px] items-center overflow-hidden bg-[#f4f4f5] pl-px">
      <Icon name="lcs" />
      <div className="ml-[2px] flex items-center gap-px bg-[#e8e8f5]">
        <span className="h-[7px] w-[6px] bg-[#c7fbfb]" />
        <Picker label="Koordinatensystem" value="1 - Global XYZ" className="w-[92px]" />
      </div>
      <span className="ml-[2px] h-[10px] w-px bg-[#dcdcdc]" />
      <Group className="w-[53px]" items="vis vis2 visarrow target vis" />
      <Group className="w-[72px]" items="ygrid ygrid ysup > loads ystar ygrid" />
      <Group className="w-[37px]" items="curve > num >" />
      <Group className="w-[111px]" items="pairv vee bend > curve curve par cross cross poly bend" />
      <Group className="w-[48px]" items="par > par cross cross" last />
      <div className="ml-auto flex h-full">
        <Group className="w-[37px]" items="!snap startable !snap" />
        <Group className="w-[25px]" items="ygrid !snap" />
        <Group className="w-[16px]" items="corner" />
        <Group
          className="w-[197px]"
          items="!snap !magnet !sq !sqc sqc !perp seg dpar tang ring slashq slashq slashq burst !lgrid !bounds !slab !dash !person"
          last
        />
      </div>
    </div>
    <div className="flex h-[10px] items-center border-b border-[#a9a9a9] bg-linear-to-r from-[#e6e7ef] via-[#d9daea] to-[#e6e7ef]">
      <span className="w-[68%] pl-[517px] whitespace-nowrap">KS: Global XYZ</span>
      <span className="ml-[102px] whitespace-nowrap">Ebene: XY</span>
    </div>
  </footer>
);

export default function App() {
  return (
    <div className="relative flex min-h-screen flex-col overflow-hidden bg-[#f3f3f3] font-['Open_Sans','Noto_Sans',sans-serif] text-[5px] leading-[9px] text-[#333]">
      <Header />
      <main className="flex flex-1 gap-[3px] pr-[3px] pl-[2px]">
        <Navigator />
        <div className="flex min-w-0 flex-1 flex-col">
          <Model />
          <Materials />
        </div>
      </main>
      <Footer />
      <ContextMenu />
      <svg viewBox="0 0 8 12" className="absolute top-[36px] right-[33px] h-[9px] w-[6px]" aria-hidden="true">
        <path d="M1 0v9l2-2 2 4 1.500-1L5 6.500h3z" fill="#fff" stroke="#222" strokeWidth=".9" />
      </svg>
    </div>
  );
}
